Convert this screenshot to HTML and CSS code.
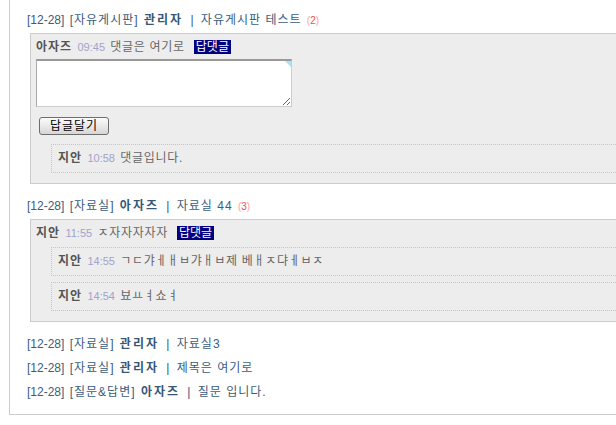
FILE: index.html
```html
<!DOCTYPE html>
<html lang="ko">
<head>
  <meta charset="UTF-8" />
  <title>최근 게시물</title>
  <link rel="stylesheet" href="styles.css">
</head>
<body>
  <div class="latest">
    <ul class="posts">
      <li class="post">
        <div class="post-title">
          <a class="date">[12-28]</a> <a class="board">[자유게시판]</a> <b class="writer">관리자</b> <span class="bar">|</span> <a class="subject">자유게시판 테스트</a> <span class="count">(<em>2</em>)</span>
        </div>
        <div class="comments">
          <div class="comment-head">
            <b class="name">아자즈</b> <span class="time">09:45</span> <span class="text">댓글은 여기로</span><span class="reply-tag">답댓글</span>
          </div>
          <div class="reply-form">
            <span class="textwrap"><textarea></textarea><i class="corner"></i></span>
            <button type="button">답글달기</button>
          </div>
          <div class="reply"><b class="name">지안</b> <span class="time">10:58</span> <span class="text">댓글입니다.</span></div>
        </div>
      </li>
      <li class="post">
        <div class="post-title">
          <a class="date">[12-28]</a> <a class="board">[자료실]</a> <b class="writer">아자즈</b> <span class="bar">|</span> <a class="subject">자료실 44</a> <span class="count">(<em>3</em>)</span>
        </div>
        <div class="comments">
          <div class="comment-head">
            <b class="name">지안</b> <span class="time">11:55</span> <span class="text">ㅈ자자자자자</span><span class="reply-tag">답댓글</span>
          </div>
          <div class="reply"><b class="name">지안</b> <span class="time">14:55</span> <span class="text">ㄱㄷ갸ㅔㅐㅂ갸ㅐㅂ제 베ㅐㅈ댜ㅔㅂㅈ</span></div>
          <div class="reply"><b class="name">지안</b> <span class="time">14:54</span> <span class="text">뵤ㅛㅕ쇼ㅕ</span></div>
        </div>
      </li>
      <li class="post">
        <div class="post-title">
          <a class="date">[12-28]</a> <a class="board">[자료실]</a> <b class="writer">관리자</b> <span class="bar">|</span> <a class="subject">자료실3</a>
        </div>
      </li>
      <li class="post">
        <div class="post-title">
          <a class="date">[12-28]</a> <a class="board">[자료실]</a> <b class="writer">관리자</b> <span class="bar">|</span> <a class="subject">제목은 여기로</a>
        </div>
      </li>
      <li class="post">
        <div class="post-title">
          <a class="date">[12-28]</a> <a class="board">[질문&amp;답변]</a> <b class="writer">아자즈</b> <span class="bar">|</span> <a class="subject">질문 입니다.</a>
        </div>
      </li>
    </ul>
  </div>
</body>
</html>
```

FILE: styles.css
```css
html {
  overflow: hidden;
}
body {
  margin: 0;
  background: #fff;
  font-family: "Liberation Sans", "Noto Sans CJK KR", sans-serif;
  font-size: 12px;
  color: #666;
}
.latest {
  width: 740px;
  margin-left: 9px;
  padding: 8px 0 10px 17px;
  border: 1px solid #ccc;
  border-top: none;
}
.posts {
  margin: 0;
  padding: 0;
  list-style: none;
}
.post-title {
  line-height: 24px;
  color: #3b5c7c;
  white-space: nowrap;
  word-spacing: 2px;
}
.post-title a {
  color: #3b5c7c;
  text-decoration: none;
}
.post-title .board, .post-title .subject {
  letter-spacing: 1px;
}
.post-title .subject {
  word-spacing: 0;
}
.post-title .writer {
  color: #375775;
  letter-spacing: 2px;
}
.post-title .bar {
  color: #3b5c7c;
  margin: 0 2px;
}
.post-title .count {
  font-size: 10px;
  color: #ffa0a0;
}
.post-title .count em {
  font-style: normal;
  color: #f05050;
}

.comments {
  margin: 0 0 10px 3px;
  padding: 6px 6px 10px 5px;
  background: #ededed;
  border: 1px solid #ccc;
}
.comment-head, .reply {
  line-height: 15px;
  white-space: nowrap;
  word-spacing: 2px;
}
.name {
  color: #555;
  letter-spacing: 1px;
}
.time {
  font-size: 11px;
  color: #a2a2cb;
}
.text {
  color: #666;
  letter-spacing: 0.7px;
  word-spacing: 0;
}
.reply-tag {
  margin-left: 9px;
  padding: 0 2px;
  background: #000080;
  color: #fff;
}

.reply-form {
  margin-top: 4px;
}
.textwrap {
  position: relative;
  display: block;
  width: 256px;
}
.textwrap textarea {
  display: block;
  box-sizing: border-box;
  width: 256px;
  height: 48px;
  margin: 0;
  border: 1px solid #ccc;
  border-top: 2px solid #999;
  border-left: 1px solid #aaa;
  background: #fff;
}
.corner {
  position: absolute;
  top: 2px;
  right: 1px;
  width: 0;
  height: 0;
  border-top: 6px solid #a8e2f4;
  border-left: 6px solid transparent;
}
.reply-form button {
  display: block;
  width: 70px;
  height: 18px;
  margin: 10px 0 0 3px;
  padding: 0;
  font-family: "Liberation Sans", "Noto Sans CJK KR", sans-serif;
  font-size: 12px;
  line-height: 14px;
  letter-spacing: 1px;
  color: #000;
  border: 1px solid #6d6d6d;
  border-radius: 3px;
  background: linear-gradient(#fbfbfb, #e6e6e6 60%, #d6d6d6);
}

.reply {
  margin: 9px 0 0 15px;
  padding: 6px;
  border: 1px dotted #c4c4c4;
}
.comment-head + .reply {
  margin-top: 6px;
}
.reply + .reply {
  margin-top: 6px;
}
```
